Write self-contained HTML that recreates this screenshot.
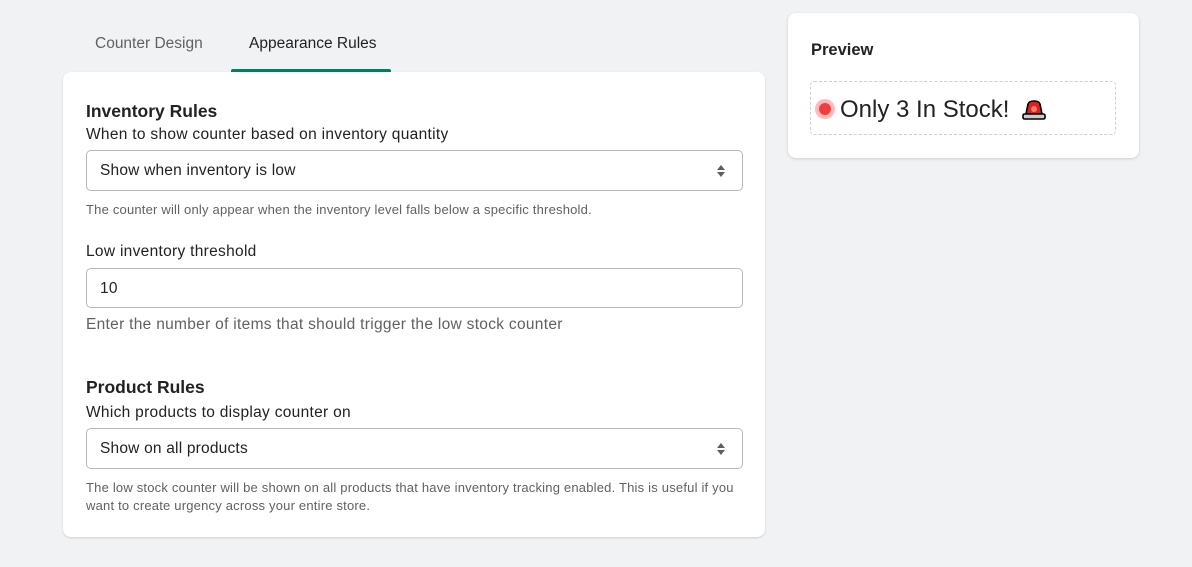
<!DOCTYPE html>
<html><head><style>
*{box-sizing:border-box;margin:0;padding:0}
body{width:1192px;height:567px;background:#f1f2f4;font-family:"Liberation Sans",sans-serif;color:#303030;position:relative;overflow:hidden}
.abs{position:absolute}
.tab{position:absolute;top:35px;font-size:15.5px}
.card{position:absolute;left:63px;top:72px;width:702px;height:465px;background:#fff;border-radius:8px;box-shadow:0 1px 2px rgba(0,0,0,.15)}
h3{position:absolute;font-size:17.5px;font-weight:bold;color:#202223}
.lbl{position:absolute;font-size:15.5px;letter-spacing:.3px;color:#202223}
.sel{position:absolute;left:23px;width:657px;height:41px;border:1px solid #b5b8bd;border-radius:5px;font-size:15.5px;letter-spacing:.2px;padding:11px 13px;color:#202223}
.help{position:absolute;left:23px;font-size:13px;letter-spacing:.2px;color:#616161;width:655px;line-height:18px}
.arr{position:absolute;right:17px;top:14px}
</style></head><body>
<div class="tab" style="left:95px;color:#616161">Counter Design</div>
<div class="tab" style="left:249px;color:#202223">Appearance Rules</div>
<div class="abs" style="left:231px;top:69px;width:160px;height:3px;background:#008060;border-radius:2px 2px 0 0"></div>
<div class="card">
<h3 style="left:23px;top:29px">Inventory Rules</h3>
<div class="lbl" style="left:23px;top:54px">When to show counter based on inventory quantity</div>
<div class="sel" style="top:78px">Show when inventory is low<svg class="arr" width="8" height="12" viewBox="0 0 8 12"><path d="M4 0L8 5H0Z M4 12L0 7H8Z" fill="#5c5f62"/></svg></div>
<div class="help" style="top:129px">The counter will only appear when the inventory level falls below a specific threshold.</div>
<div class="lbl" style="left:23px;top:171px">Low inventory threshold</div>
<div class="sel" style="top:196px;height:40px">10</div>
<div class="help" style="top:244px;font-size:15.5px;letter-spacing:.3px">Enter the number of items that should trigger the low stock counter</div>
<h3 style="left:23px;top:305px">Product Rules</h3>
<div class="lbl" style="left:23px;top:332px">Which products to display counter on</div>
<div class="sel" style="top:356px">Show on all products<svg class="arr" width="8" height="12" viewBox="0 0 8 12"><path d="M4 0L8 5H0Z M4 12L0 7H8Z" fill="#5c5f62"/></svg></div>
<div class="help" style="top:407px">The low stock counter will be shown on all products that have inventory tracking enabled. This is useful if you want to create urgency across your entire store.</div>
</div>
<div class="abs" style="left:788px;top:13px;width:351px;height:145px;background:#fff;border-radius:8px;box-shadow:0 1px 3px rgba(0,0,0,.15)">
<div class="abs" style="left:23px;top:28px;font-size:16.5px;font-weight:bold;color:#202223">Preview</div>
<div class="abs" style="left:22px;top:68px;width:306px;height:54px;border:1px dashed #d0d0d0;border-radius:4px">
<div class="abs" style="left:4px;top:17px;width:20px;height:20px;border-radius:50%;background:#fbb"></div>
<div class="abs" style="left:8px;top:21px;width:12px;height:12px;border-radius:50%;background:#f23d3d"></div>
<div class="abs" style="left:29px;top:14px;font-size:24px;color:#202223">Only 3 In Stock!</div>
<svg class="abs" style="left:210px;top:17px" width="26" height="22" viewBox="0 0 26 22"><path d="M5 15L7 5Q8 2 13 2Q18 2 19 5L21 15Z" fill="#e02020" stroke="#000" stroke-width="1.6"/><rect x="2" y="15" width="22" height="5" rx="1.5" fill="#ccc" stroke="#000" stroke-width="1.6"/><circle cx="13" cy="10" r="3" fill="#f08070"/></svg>
</div></div>
</body></html>
